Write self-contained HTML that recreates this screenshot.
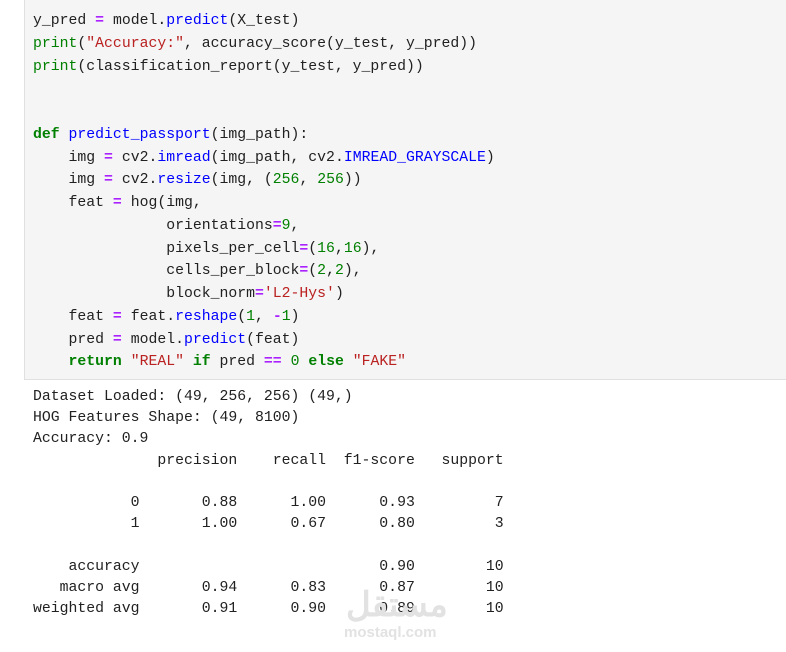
<!DOCTYPE html>
<html><head><meta charset="utf-8"><style>
body{margin:0;width:786px;height:652px;background:#fff;overflow:hidden;font-family:"Liberation Mono","DejaVu Sans Mono",monospace;font-size:14.8px;}
.cell{position:absolute;left:24px;top:-2px;width:770px;height:381px;background:#f5f5f5;border-left:1px solid #e0e0e0;border-bottom:1px solid #e0e0e0;}
pre{margin:0;font-family:inherit;font-size:inherit;}
.code{position:absolute;left:33px;top:10px;line-height:22.75px;color:#212121;}
.out{position:absolute;left:33px;top:387px;line-height:21.2px;color:#212121;}
.k{color:#008000;font-weight:bold}.o{color:#aa22ff;font-weight:bold}.f{color:#0000ff}.s{color:#ba2121}.n{color:#008000}.b{color:#008000}
.wm{position:absolute;left:344px;top:588px;color:#e2e2e2;font-family:"Liberation Sans",sans-serif;}
</style></head><body>
<div class="cell"></div>
<pre class="code">y_pred <span class="o">=</span> model<span>.</span><span class="f">predict</span>(X_test)
<span class="b">print</span>(<span class="s">"Accuracy:"</span>, accuracy_score(y_test, y_pred))
<span class="b">print</span>(classification_report(y_test, y_pred))


<span class="k">def</span> <span class="f">predict_passport</span>(img_path):
    img <span class="o">=</span> cv2.<span class="f">imread</span>(img_path, cv2.<span class="f">IMREAD_GRAYSCALE</span>)
    img <span class="o">=</span> cv2.<span class="f">resize</span>(img, (<span class="n">256</span>, <span class="n">256</span>))
    feat <span class="o">=</span> hog(img,
               orientations<span class="o">=</span><span class="n">9</span>,
               pixels_per_cell<span class="o">=</span>(<span class="n">16</span>,<span class="n">16</span>),
               cells_per_block<span class="o">=</span>(<span class="n">2</span>,<span class="n">2</span>),
               block_norm<span class="o">=</span><span class="s">'L2-Hys'</span>)
    feat <span class="o">=</span> feat.<span class="f">reshape</span>(<span class="n">1</span>, <span class="o">-</span><span class="n">1</span>)
    pred <span class="o">=</span> model.<span class="f">predict</span>(feat)
    <span class="k">return</span> <span class="s">"REAL"</span> <span class="k">if</span> pred <span class="o">==</span> <span class="n">0</span> <span class="k">else</span> <span class="s">"FAKE"</span></pre>
<pre class="out">Dataset Loaded: (49, 256, 256) (49,)
HOG Features Shape: (49, 8100)
Accuracy: 0.9
              precision    recall  f1-score   support

           0       0.88      1.00      0.93         7
           1       1.00      0.67      0.80         3

    accuracy                           0.90        10
   macro avg       0.94      0.83      0.87        10
weighted avg       0.91      0.90      0.89        10</pre>
<div class="wm"><div style="font-size:34px;font-weight:bold;line-height:34px;margin-left:2px">مستقل</div><div style="font-size:15px;font-weight:bold;margin-top:2px">mostaql.com</div></div>
</body></html>
